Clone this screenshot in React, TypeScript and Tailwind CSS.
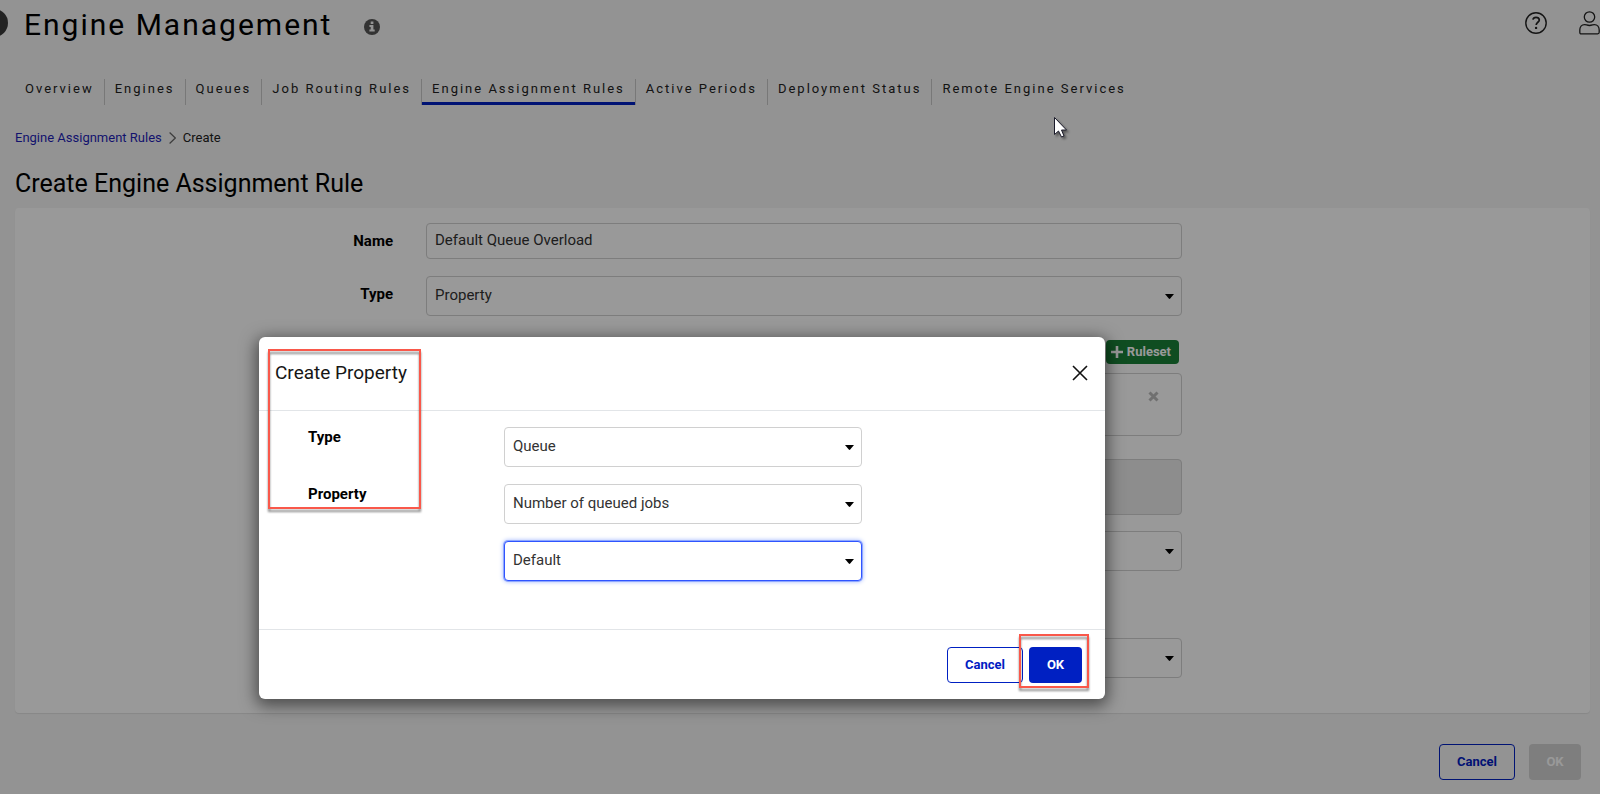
import type { ReactNode } from 'react';

const TABS = [
  'Overview',
  'Engines',
  'Queues',
  'Job Routing Rules',
  'Engine Assignment Rules',
  'Active Periods',
  'Deployment Status',
  'Remote Engine Services',
];

type SelectBoxProps = {
  id: string;
  label?: string;
  options: string[];
  focused?: boolean;
};

function SelectBox({ id, label, options, focused = false }: SelectBoxProps) {
  const frame = focused
    ? 'border-[#2f54ff] ring-1 ring-[#8fa8ff] shadow-[0_0_4px_1px_#a9bcff]'
    : 'border-[#d0d0d0]';
  return (
    <div className="relative">
      <select
        id={id}
        aria-label={label}
        className={`block h-10 w-full appearance-none rounded border bg-white pr-8 pb-0.5 pl-2 text-[15px] leading-5 text-[#333] outline-none ${frame}`}
      >
        {options.map((option) => (
          <option key={option}>{option}</option>
        ))}
      </select>
      <svg
        className="pointer-events-none absolute inset-y-0 right-2 my-auto h-[5px] w-[9px]"
        viewBox="0 0 9 5"
        aria-hidden="true"
      >
        <path d="M0 0H9L5.2 4.6Q4.5 5.2 3.8 4.6Z" fill="#000" />
      </svg>
    </div>
  );
}

function FormRow({ label, htmlFor, children }: { label: string; htmlFor: string; children: ReactNode }) {
  return (
    <div className="grid grid-cols-[378px_minmax(0,756px)] gap-[33px]">
      <label htmlFor={htmlFor} className="pt-2 text-right text-[15px] leading-5 font-bold text-black">
        {label}
      </label>
      {children}
    </div>
  );
}

function Header() {
  return (
    <header className="relative flex h-12 items-center justify-between pl-6">
      <button
        type="button"
        aria-label="Expand navigation"
        className="absolute top-[9px] -left-5 size-7 rounded-full bg-[#3a3a3a]"
      />
      <div className="flex items-center gap-8 pt-0.5">
        <h1 className="text-[30px] leading-9 tracking-[2px] text-black">Engine Management</h1>
        <svg className="mt-1 size-4" viewBox="0 0 16 16" aria-label="Information" role="img">
          <circle cx="8" cy="8" r="8" fill="#555" />
          <path d="M6.7 2.6h2.7v2.3H6.7zM5.4 6h4v4.6h1.3v2H5.4v-2h1.3V8H5.4z" fill="#f5f5f5" />
        </svg>
      </div>
      <div className="flex items-center gap-8 pb-0.5">
        <button type="button" aria-label="Help">
          <svg className="size-[22px]" viewBox="0 0 22 22" fill="none" stroke="#222" strokeWidth="1.4">
            <circle cx="11" cy="11" r="10.2" />
            <path d="M7.9 7.6C8.2 6 9.3 5.3 11 5.3c1.9 0 3.3 1 3.3 2.7 0 2.3-3.1 2.3-3.1 5" strokeWidth="1.7" />
            <circle cx="11.1" cy="15.9" r=".7" fill="#222" stroke="none" />
            <circle cx="11.1" cy="15.9" r=".5" />
          </svg>
        </button>
        <button type="button" aria-label="Account">
          <svg className="h-6 w-[21px]" viewBox="0 0 21 24" fill="none" stroke="#222" strokeWidth="1.3">
            <circle cx="10.5" cy="6" r="5.2" />
            <path d="M5.6 13.6c1.6 0 2.4.9 4.9.9s3.3-.9 4.9-.9c3 0 4.8 2.4 4.8 5.4v2.3c0 1-.5 1.5-1.5 1.5H2.3c-1 0-1.5-.5-1.5-1.5V19c0-3 1.8-5.4 4.8-5.4z" />
          </svg>
        </button>
      </div>
    </header>
  );
}

function TabBar() {
  return (
    <nav className="mt-[31px] ml-[15px] flex" aria-label="Engine management sections">
      {TABS.map((tab, index) => {
        const active = tab === 'Engine Assignment Rules';
        return (
          <a
            key={tab}
            href="#"
            aria-current={active ? 'page' : undefined}
            className={`relative h-[26px] px-[10px] text-[13px] leading-5 tracking-[2px] whitespace-nowrap text-[#222] ${
              index < TABS.length - 1 ? 'border-r border-[#c8c8c8]' : ''
            }`}
          >
            {tab}
            {active && <span className="absolute inset-x-0 bottom-0 h-[3px] bg-[#0020c2]" />}
          </a>
        );
      })}
    </nav>
  );
}

function RuleForm() {
  return (
    <section className="mr-[10px] ml-[15px] flex flex-col rounded bg-white pt-[15px] pb-[35px] shadow-[0_1px_1px_rgba(0,0,0,0.08)]">
      <FormRow label="Name" htmlFor="rule-name">
        <input
          id="rule-name"
          type="text"
          defaultValue="Default Queue Overload"
          className="h-9 w-full rounded border border-[#d0d0d0] px-2 pb-0.5 text-[15px] leading-5 text-[#333]"
        />
      </FormRow>
      <div className="mt-[17px]">
        <FormRow label="Type" htmlFor="rule-type">
          <SelectBox id="rule-type" options={['Property']} />
        </FormRow>
      </div>
      <div className="mt-6 grid grid-cols-[378px_minmax(0,756px)] gap-[33px]">
        <div />
        <div className="flex flex-col">
          <button
            type="button"
            className="mr-[3px] flex h-6 items-center gap-1 self-end rounded bg-[#198038] pr-2 pl-[5px] text-[13px] leading-5 font-bold text-white"
          >
            <svg className="size-3" viewBox="0 0 12 12" aria-hidden="true">
              <path d="M4.7 0h2.6v4.7H12v2.6H7.3V12H4.7V7.3H0V4.7h4.7z" fill="#fff" />
            </svg>
            Ruleset
          </button>
          <div className="mt-[9px] flex h-[63px] justify-end rounded border border-[#d0d0d0] pt-[17px] pr-[22px]">
            <button type="button" aria-label="Remove ruleset" className="size-[11px]">
              <svg viewBox="0 0 11 11" aria-hidden="true">
                <path d="M1.5 1.5l8 8M9.5 1.5l-8 8" stroke="#bbb" strokeWidth="3" />
              </svg>
            </button>
          </div>
          <div className="mt-[23px] h-14 rounded border border-[#d0d0d0] bg-[#ebebeb]" />
          <div className="mt-4">
            <SelectBox id="rule-engine" label="Engine" options={['']} />
          </div>
          <div className="mt-[67px]">
            <SelectBox id="rule-period" label="Period" options={['']} />
          </div>
        </div>
      </div>
    </section>
  );
}

function Marker({ className }: { className: string }) {
  return (
    <div
      aria-hidden="true"
      className={`pointer-events-none absolute border-2 border-[#f9584a] drop-shadow-[0_3px_1px_rgba(0,0,0,0.45)] ${className}`}
    />
  );
}

function PropertyDialog() {
  return (
    <div
      role="dialog"
      aria-modal="true"
      aria-labelledby="dialog-title"
      className="relative w-full max-w-[846px] rounded-md bg-white shadow-[0_4px_16px_3px_rgba(0,0,0,0.5)]"
    >
      <div className="flex h-[74px] items-center justify-between border-b border-[#e2e5e8] pr-[17px] pb-0.5 pl-4">
        <h2 id="dialog-title" className="text-[19px] leading-7 text-[#161616]">
          Create Property
        </h2>
        <button type="button" aria-label="Close">
          <svg className="size-4" viewBox="0 0 16 16" fill="none" stroke="#111" strokeWidth="1.6">
            <path d="M1 1l14 14M15 1L1 15" />
          </svg>
        </button>
      </div>
      <div className="grid grid-cols-[147px_358px] gap-x-[49px] gap-y-[17px] pt-4 pb-12 pl-[49px]">
        <label htmlFor="property-type" className="text-[15px] leading-5 font-bold text-black">
          Type
        </label>
        <SelectBox id="property-type" options={['Queue']} />
        <label htmlFor="property-name" className="text-[15px] leading-5 font-bold text-black">
          Property
        </label>
        <SelectBox id="property-name" options={['Number of queued jobs']} />
        <div />
        <SelectBox id="property-queue" label="Queue" options={['Default']} focused />
      </div>
      <div className="flex h-[70px] items-center justify-end gap-[6px] border-t border-[#e2e5e8] pr-[23px]">
        <button
          type="button"
          className="h-9 w-[76px] rounded border border-[#0020c2] bg-white text-[13px] leading-5 font-bold text-[#0020c2]"
        >
          Cancel
        </button>
        <button type="button" className="h-9 w-[53px] rounded bg-[#0020c2] text-[13px] leading-5 font-bold text-white">
          OK
        </button>
      </div>
      <Marker className="top-3 left-[9px] h-[160px] w-[153px]" />
      <Marker className="right-4 bottom-[11px] h-[54px] w-[70px]" />
    </div>
  );
}

export default function App() {
  return (
    <div className="relative min-h-screen overflow-hidden bg-[#f5f5f5] font-[Roboto,'Liberation_Sans',sans-serif]">
      <Header />
      <TabBar />
      <nav className="mt-[23px] flex items-center gap-[7px] pl-[15px] text-[13px] leading-5" aria-label="Breadcrumb">
        <a href="#" className="text-[#1f1fb8]">
          Engine Assignment Rules
        </a>
        <svg className="h-3 w-[7px]" viewBox="0 0 7 12" fill="none" stroke="#666" strokeWidth="1.2" aria-hidden="true">
          <path d="M.6.5L6.3 6 .6 11.5" />
        </svg>
        <span className="text-[#222]">Create</span>
      </nav>
      <h2 className="mt-5 mb-2 pl-[15px] text-[25px] leading-8 text-black">Create Engine Assignment Rule</h2>
      <RuleForm />
      <footer className="flex justify-end gap-[14px] pt-[31px] pr-[19px] pb-[14px]">
        <button
          type="button"
          className="h-9 w-[76px] rounded border border-[#0020c2] text-[13px] leading-5 font-bold text-[#0020c2]"
        >
          Cancel
        </button>
        <button type="button" disabled className="h-9 w-[52px] rounded bg-[#d2d2d2] text-[13px] leading-5 font-bold text-white">
          OK
        </button>
      </footer>
      <div className="absolute inset-0 flex items-start bg-black/40 pt-[337px] pl-[259px]">
        <PropertyDialog />
      </div>
      <svg
        className="pointer-events-none absolute top-[116px] left-[1053px] h-[24px] w-[18px] drop-shadow-[2px_2px_1px_rgba(0,0,0,0.4)]"
        viewBox="0 0 18 24"
        aria-hidden="true"
      >
        <path d="M1.5 1.5V18.5L5.5 15L8.5 21L11 20L8.5 14H13.5Z" fill="#fff" stroke="#1a1a2a" strokeWidth="1" />
      </svg>
    </div>
  );
}
